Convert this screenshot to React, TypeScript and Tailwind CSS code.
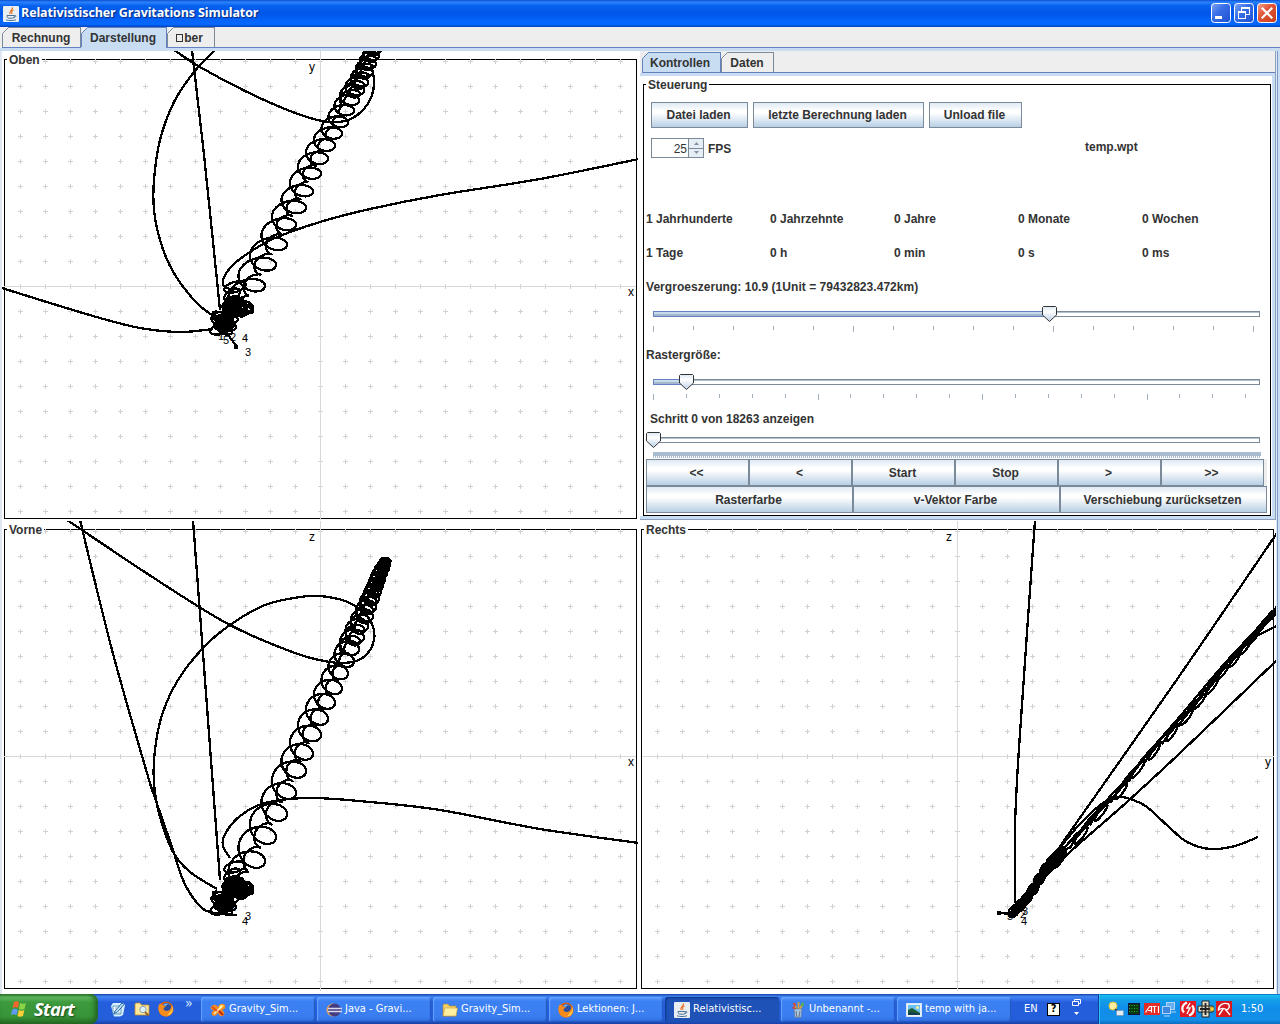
import type { ReactNode } from "react";

type Pt = [number, number];

/* Turns of the binary orbit: right edge x, top-view y, front-view z, width */
const TURNS: [number, number, number, number][] = [
  [252, 307, 884, 28],
  [265, 285, 859, 32],
  [276, 264, 835, 32],
  [287, 244, 812, 31],
  [296, 224, 791, 29],
  [306, 207, 769, 29],
  [313, 191, 752, 27],
  [321, 173, 733, 27],
  [328, 158, 717, 26],
  [335, 145, 701, 25],
  [342, 133, 687, 24],
  [348, 122, 672, 23],
  [354, 110, 660, 22],
  [359, 100, 648, 22],
  [364, 90, 636, 21],
  [368, 82, 625, 20],
  [373, 72, 615, 19],
  [376, 64, 606, 18],
  [379, 56, 598, 17],
  [381, 50, 591, 16],
  [383, 44, 585, 15],
  [385, 38, 579, 15],
  [387, 33, 573, 14],
  [389, 28, 568, 13],
  [390, 24, 564, 11],
  [391, 21, 562, 11],
];

type View = "top" | "front" | "right";

function coil(view: View, scale: number, phase: number, start = 0): string {
  const out: string[] = [];
  const steps = 36;
  const lag = view === "right" ? 0.4 : 0.08;
  for (let i = start * steps; i <= (TURNS.length - 1) * steps; i++) {
    const n = Math.min(Math.floor(i / steps), TURNS.length - 2);
    const f = i / steps - n;
    const [x, y, z, w] = TURNS[n].map((v, k) => v + (TURNS[n + 1][k] - v) * f);
    const a = (i / steps) * Math.PI * 2 + phase;
    const px = x - w / 2 + (w / 2) * scale * Math.cos(a);
    const py = y + w * 0.35 * scale * Math.sin(a);
    const pz = z + w * 0.44 * scale * Math.sin(a + lag);
    const p: Pt = view === "top" ? [px, py] : view === "front" ? [px, pz] : [1345 - py, pz - 1];
    out.push(p[0].toFixed(1) + "," + p[1].toFixed(1));
  }
  return "M" + out.join("L");
}

/* Catmull-Rom spline through the points */
function spline(p: Pt[]): string {
  let d = `M${p[0][0]},${p[0][1]}`;
  for (let i = 0; i < p.length - 1; i++) {
    const a = p[Math.max(i - 1, 0)];
    const b = p[i];
    const c = p[i + 1];
    const e = p[Math.min(i + 2, p.length - 1)];
    d += `C${b[0] + (c[0] - a[0]) / 6},${b[1] + (c[1] - a[1]) / 6} ${c[0] - (e[0] - b[0]) / 6},${c[1] - (e[1] - b[1]) / 6} ${c[0]},${c[1]}`;
  }
  return d;
}

type Ell = [number, number, number, number, number];

interface PlotProps {
  title: string;
  view: View;
  x: number;
  y: number;
  w: number;
  h: number;
  cx: number;
  cy: number;
  curves: Pt[][];
  knots: Ell[];
  marks: [string, number, number][];
  axes: [string, number, number][];
  frame: string;
  extra?: ReactNode;
}

function Plot(p: PlotProps) {
  let grid = "";
  for (let gx = p.cx - 300; gx <= p.cx + 300; gx += 25)
    for (let gy = p.cy - 225; gy <= p.cy + 225; gy += 25)
      if (gx !== p.cx || gy !== p.cy) grid += `M${gx - 2},${gy + 0.5}h5M${gx + 0.5},${gy - 2}v5`;
  return (
    <section className="relative h-full min-w-0 overflow-hidden bg-white">
      <div className={p.frame}>
        <span className="relative -top-[7px] left-[2px] z-10 block w-max bg-white px-[2px] text-[12px] leading-[14px] font-bold text-[#333]">{p.title}</span>
      </div>
      <svg className="absolute inset-0" width={p.w} height={p.h} viewBox={`${p.x} ${p.y} ${p.w} ${p.h}`}>
        <path d={grid} stroke="#d2d2d2" strokeWidth="1" shapeRendering="crispEdges" />
        <path d={`M${p.cx + 0.5},${p.y}V${p.y + p.h}M${p.x + 2},${p.cy + 0.5}H${p.x + p.w - 2}`} stroke="#d8d8d8" shapeRendering="crispEdges" />
        <g fill="none" stroke="#000" strokeWidth="2.3" shapeRendering="crispEdges">
          {p.curves.map((c, i) => (
            <path key={i} d={spline(c)} />
          ))}
          <path d={coil(p.view, 1, 0)} />
          <path d={coil(p.view, 0.34, Math.PI)} />
          <path d={coil(p.view, 0.8, 2.4, 13)} />
          {p.knots.map(([a, b, rx, ry, r], i) => (
            <ellipse key={i} cx={a} cy={b} rx={rx} ry={ry} transform={`rotate(${r} ${a} ${b})`} />
          ))}
          {p.extra}
        </g>
        <g fill="#000" fontFamily="Liberation Sans, sans-serif">
          {p.axes.map(([t, a, b]) => (
            <text key={t} x={a} y={b} fontSize="12">{t}</text>
          ))}
          {p.marks.map(([t, a, b], i) => (
            <text key={i} x={a} y={b} fontSize="11">{t}</text>
          ))}
        </g>
      </svg>
    </section>
  );
}

const GRAD = "bg-[linear-gradient(to_bottom,#dfe9f4_0%,#ffffff_32%,#ffffff_42%,#b8cfe5_100%)]";

function MetalButton({ children, className }: { children: ReactNode; className: string }) {
  return (
    <button className={`${GRAD} shrink-0 border border-[#7a8a99] pr-[2px] text-center text-[12px] font-bold text-[#333] ${className}`}>{children}</button>
  );
}

function Slider({ thumb, filled, step, count }: { thumb: number; filled: boolean; step: number; count: number }) {
  return (
    <svg className="block" width="627" height="30" viewBox="643 0 627 30" shapeRendering="crispEdges">
      <defs>
        <linearGradient id="thumbFill" x1="0" y1="0" x2="0" y2="1">
          <stop offset="0" stopColor="#dde8f3" />
          <stop offset=".35" stopColor="#fff" />
          <stop offset="1" stopColor="#b8cfe5" />
        </linearGradient>
      </defs>
      <rect x="653.5" y="6.5" width="606" height="5" fill="#fff" stroke="#7a8a99" />
      <path d="M654 7.5H1259" stroke="#b5c0cb" />
      {filled && (
        <>
          <rect x="653.5" y="6.5" width={thumb - 653} height="5" fill="#c8daec" stroke="#6382bf" />
          <path d={`M654 10H${thumb}`} stroke="#a3b8cc" strokeWidth="2" />
        </>
      )}
      {count > 0 ? (
        Array.from({ length: count }, (_, i) => (
          <path key={i} d={`M${Math.round(653 + step * i) + 0.5} 21v${i % 5 === 0 ? 6 : 4}`} stroke="#a3b0be" />
        ))
      ) : (
        <>
          <rect x="653" y="21" width="608" height="4" fill="#a9bccf" />
          <path d="M653 26H1261" stroke="#a9bccf" strokeWidth="2" strokeDasharray="1 1" />
        </>
      )}
      <path d={`M${thumb - 6.5} 2.5l1-1h12l1 1v7.5l-7 6.5l-7-6.5z`} fill="url(#thumbFill)" stroke="#333" shapeRendering="auto" />
    </svg>
  );
}

function Tab({ label, active, className }: { label: ReactNode; active?: boolean; className: string }) {
  return (
    <div className={`relative flex h-[20px] items-center justify-center border-t border-r text-[12px] font-bold text-[#333] ${active ? "border-[#6382bf] bg-[#c8ddf2]" : "border-[#7a8a99] bg-[#eeeeee]"} ${className}`}>
      <svg className="absolute -top-px left-0" width="8" height="20">
        <path d="M0 0H7L0 7z" fill="#eeeeee" />
        <path d="M.5 20V6.5L6.5.5H8" fill="none" stroke={active ? "#6382bf" : "#7a8a99"} />
      </svg>
      {label}
    </div>
  );
}

function JavaIcon() {
  return (
    <svg width="16" height="16" viewBox="0 0 16 16">
      <rect width="16" height="16" rx="1" fill="#e9eef2" />
      <path d="M9.5 1.5C10 4 6 4.500 7 8M10.500 4C8 5 8.500 6 9 8" fill="none" stroke="#e76f20" strokeWidth="1.2" />
      <path d="M4 9.500h7.500c0 2-1 2.700-2 2.700H6C5 12.200 4 11.500 4 9.500zM11.500 9.500c2-.5 2 2-1 2M3 13.800c3 1 7 1 10 0" fill="none" stroke="#4c7395" />
    </svg>
  );
}

function FirefoxIcon() {
  return (
    <svg width="16" height="16" viewBox="0 0 16 16">
      <circle cx="8" cy="8" r="7.500" fill="#e66000" />
      <circle cx="8.500" cy="6.500" r="4.800" fill="#2a4fa0" />
      <path d="M5 4c2-2 5-2 7 0-3-1-4 0-4 1z" fill="#7cb8ee" />
      <path d="M1 3.500C2 2 3 3 4.500 4L8 5.500 5.500 7c0 3 3 4 6 2 2-2 2-4 1.500-6 4 4 2.500 12-5 12.500C2 15.500-1 9 1 3.500z" fill="#f58a1d" />
      <path d="M12 11c2-1 2.500-4 2-6 2 4 0 9-5 9.500z" fill="#ffd34a" />
    </svg>
  );
}

function FolderIcon({ search }: { search?: boolean }) {
  return (
    <svg width="16" height="16" viewBox="0 0 16 16">
      {search ? (
        <>
          <path d="M1 3l1-1h4l1.500 2H15v10H1z" fill="#ffe99a" stroke="#c08b2a" strokeWidth=".8" />
          <circle cx="9" cy="8.500" r="3.200" fill="#dff2fd" stroke="#8c9fb3" />
          <path d="M11 11l3.500 3.500" stroke="#9a6226" strokeWidth="2" />
        </>
      ) : (
        <>
          <path d="M1 3l1-1h4l1.500 2H14v10H1z" fill="#f3d06a" stroke="#b98520" strokeWidth=".6" />
          <path d="M1 14L3 6h12.500L14 14z" fill="#fff0a0" stroke="#d2a037" strokeWidth=".6" />
        </>
      )}
    </svg>
  );
}

function ToolIcon() {
  return (
    <svg width="16" height="16" viewBox="0 0 16 16">
      <path d="M1 5c2-3 5-3 7 0 2-4 5-4 7-2 1 3 0 4-3 5 3 2 3 4 1 6-3 1-4-1-5-3-2 3-4 4-6 2-1-2 0-4 2-5-3 0-4-2-3-3z" fill="#f58a22" />
      <path d="M9 4c2-2 4-1 5 0l-4 4z" fill="#ffd94a" />
      <path d="M4 12L12 4" stroke="#fff4cf" strokeWidth="1.400" />
      <path d="M9 9l4 4" stroke="#c12a16" strokeWidth="2.200" />
      <path d="M2 5l5 4" stroke="#d63c1c" strokeWidth="1.600" />
    </svg>
  );
}

function EclipseIcon() {
  return (
    <svg width="16" height="16" viewBox="0 0 16 16">
      <circle cx="7" cy="8" r="6.500" fill="#e9a95c" />
      <circle cx="8.500" cy="8" r="6.500" fill="#453c80" />
      <path d="M2 6.500h14M2 9.500h14" stroke="#dcd9ef" strokeWidth="1.400" />
    </svg>
  );
}

function PaintIcon() {
  return (
    <svg width="16" height="16" viewBox="0 0 16 16">
      <path d="M4 1l3 8M13 1L9 9M8.500 0v8" stroke="#dca038" strokeWidth="1.800" />
      <path d="M4 1l1 3M3 5l3 3" stroke="#da3d2a" strokeWidth="2" />
      <path d="M13 1l-1 3" stroke="#4db04c" strokeWidth="2.500" />
      <path d="M4 7h8l-1 8.500H5z" fill="#a9c8e4" stroke="#5b7998" strokeWidth=".7" />
      <path d="M6 9l1 6M10 9l-1 6" stroke="#716d7c" />
    </svg>
  );
}

function PictureIcon() {
  return (
    <svg width="16" height="16" viewBox="0 0 16 16">
      <rect x=".5" y="1.500" width="15" height="13" fill="#e7f4ff" stroke="#dbe7ee" />
      <rect x="2" y="3" width="12" height="10" fill="#6bc1ef" />
      <path d="M2 8l4-2 8 5v2H2z" fill="#1c5b35" />
      <path d="M2 11c4-2 8 0 12 1v1H2z" fill="#123b50" />
      <circle cx="11.500" cy="5.500" r="1.500" fill="#fff0a0" />
    </svg>
  );
}

function DesktopIcon() {
  return (
    <svg width="16" height="16" viewBox="0 0 16 16">
      <path d="M1 5l2-3h10l2 2-2 10-3 1.500H4z" fill="#d8f0fa" />
      <path d="M3 5h8v8H3z" fill="#fff" stroke="#5c9abf" />
      <path d="M5 10l7-8 2 1.500-7 8-3 1z" fill="#b9dff5" stroke="#2663a7" />
      <path d="M5 7h3M8 12h3" stroke="#7fb2cf" />
    </svg>
  );
}

function Task({ icon, label, active }: { icon: ReactNode; label: string; active?: boolean }) {
  return (
    <div
      className={`flex h-[25px] w-[114px] shrink-0 items-center gap-[3px] rounded-[3px] pl-[9px] text-[11px] text-white ${
        active
          ? "bg-[#1e52b7] shadow-[inset_1px_1px_2px_#0f3585]"
          : "bg-[linear-gradient(to_bottom,#5a9bff_0%,#3c81f3_18%,#3a7df0_80%,#2f6bdb_100%)] shadow-[inset_1px_1px_1px_#69a4ff,inset_-1px_-1px_1px_#2457bd]"
      }`}
    >
      {icon}
      <span className="whitespace-nowrap">{label}</span>
    </div>
  );
}

function WinButton({ kind }: { kind: "min" | "max" | "close" }) {
  return (
    <svg width="20" height="20" viewBox="0 0 20 20">
      <defs>
        <linearGradient id={`wb-${kind}`} x1="0" y1="0" x2="1" y2="1">
          <stop offset="0" stopColor={kind === "close" ? "#f0a58c" : "#7fa6f5"} />
          <stop offset=".4" stopColor={kind === "close" ? "#e2573a" : "#3a6fe8"} />
          <stop offset="1" stopColor={kind === "close" ? "#c93c17" : "#1f50cf"} />
        </linearGradient>
      </defs>
      <rect x=".5" y=".5" width="19" height="19" rx="3" fill={`url(#wb-${kind})`} stroke="#fff" />
      {kind === "min" && <path d="M4 14.500h7" stroke="#fff" strokeWidth="3" />}
      {kind === "max" && (
        <g fill="none" stroke="#fff">
          <path d="M7.500 8V4.500h8v7H12" />
          <path d="M7 5h9" strokeWidth="2" />
          <rect x="4.500" y="8.500" width="7" height="7" />
          <path d="M4 9h8" strokeWidth="2" />
        </g>
      )}
      {kind === "close" && <path d="M5.500 5.500l9 9M14.500 5.500l-9 9" stroke="#fff" strokeWidth="2.200" strokeLinecap="square" />}
    </svg>
  );
}

const TOP_CURVES: Pt[][] = [
  [[215, 50], [194, 72], [174, 102], [160, 140], [154, 180], [154, 210], [160, 240], [170, 266], [184, 288], [200, 306], [215, 317]],
  [[174, 50], [200, 67], [245, 91], [290, 111], [322, 121], [345, 121], [362, 111], [372, 95], [374, 80], [371, 65]],
  [[192, 50], [204, 155], [220, 310]],
  [[2, 288], [50, 303], [100, 318], [140, 328], [180, 332], [213, 329]],
  [[639, 159], [540, 179], [440, 195], [370, 209], [320, 222], [275, 238], [250, 252], [232, 266], [223, 280], [225, 287], [234, 290]],
  [[226, 332], [237, 347]],
];
const FRONT_CURVES: Pt[][] = [
  [[217, 889], [190, 872], [173, 852], [160, 817], [154, 783], [155, 750], [162, 715], [178, 680], [203, 648], [230, 625], [265, 605], [300, 597], [320, 596], [345, 601], [362, 611], [372, 624], [374, 640], [366, 655], [352, 662], [330, 662], [295, 653], [230, 625], [160, 582], [67, 520]],
  [[80, 520], [112, 650], [147, 773], [155, 798], [172, 847], [183, 880], [197, 903], [210, 912], [237, 915]],
  [[193, 520], [208, 720], [220, 880]],
  [[639, 843], [540, 829], [440, 810], [370, 802], [310, 798], [265, 803], [240, 816], [225, 834], [223, 846], [230, 858]],
];
const RIGHT_CURVES: Pt[][] = [
  [[1035, 520], [1019, 748], [1015, 828], [1015, 903]],
  [[1277, 533], [1178, 678], [1070, 832], [1047, 868], [1030, 892]],
  [[1277, 660], [1180, 753], [1127, 802], [1070, 852], [1040, 882], [1014, 908]],
  [[1258, 837], [1235, 846], [1210, 849], [1187, 842], [1170, 828], [1147, 807], [1133, 800], [1120, 797], [1103, 803], [1080, 824], [1060, 848], [1030, 890]],
  [[1277, 626], [1257, 636], [1240, 649], [1226, 662]],
  [[1277, 608], [1226, 662], [1182, 714], [1150, 751], [1116, 794], [1062, 850]],
  [[1277, 613], [1228, 662]],
  [[998, 913], [1014, 914]],
];

function denseKnots(dy: number, stretch: number): Ell[] {
  const k: Ell[] = [];
  for (let i = 0; i < 13; i++) {
    k.push([221 + (i % 4) * 2, dy + 329 - (i % 5) * 3, 11 - (i % 3) * 3, 5 - (i % 2), -15 + i * 4]);
    k.push([233 + (i % 5) * 2.5, dy + 306 + ((i * 3) % 5) * stretch - 2, 11 - (i % 3) * 2, 6 - (i % 2) * 2, i * 5 - 20]);
    k.push([225 + i * 0.6, dy + 322 - i * 1.6, 8, 5, -50]);
  }
  k.push([235, dy + 287, 11, 5, -15], [232, dy + 295, 9, 5, -35], [242, dy + 309, 11, 7, -15]);
  return k;
}

const RIGHT_KNOTS: Ell[] = Array.from({ length: 30 }, (_, i): Ell => {
  const f = i / 29;
  return [1014 + f * 46, 911 - f * 57 + Math.sin(f * 6) * 3, 7, i % 4 === 0 ? 4.5 : 2.5, -52];
});

export default function App() {
  return (
    <div className="flex h-[1024px] w-[1280px] flex-col overflow-hidden bg-[#eeeeee] [font-family:'Liberation_Sans',Arial,sans-serif]">
      <header className="flex h-[27px] shrink-0 items-center bg-[linear-gradient(to_bottom,#0b50d3_0%,#2b82fb_8%,#0560ef_22%,#0056e8_50%,#0565fc_78%,#0468ff_90%,#0341b8_100%)] pr-[3px] pl-[3px]">
        <JavaIcon />
        <h1 className="ml-[2px] flex-1 text-[12.5px] font-bold tracking-[-0.12px] whitespace-nowrap text-white [font-family:'Open_Sans','Noto_Sans',sans-serif] [text-shadow:1px_1px_1px_#0a2a80]">Relativistischer Gravitations Simulator</h1>
        <div className="flex gap-[3px] pb-[2px]">
          <WinButton kind="min" />
          <WinButton kind="max" />
          <WinButton kind="close" />
        </div>
      </header>

      <nav className="flex h-[24px] shrink-0 items-end border-b-[3px] border-[#c8ddf2] pl-[2px]">
        <div className="flex w-full border-b border-[#6382bf]">
          <Tab label="Rechnung" className="w-[79px]" />
          <Tab label="Darstellung" active className="-mb-px h-[21px] w-[86px] pr-px" />
          <Tab
            label={
              <span className="flex items-center">
                <span className="mr-px h-[8px] w-[7px] border border-[#333]" />
                ber
              </span>
            }
            className="w-[48px] pr-[2px]"
          />
        </div>
      </nav>

      <main className="flex min-h-0 flex-1 bg-[#dfe8f1] pl-[2px]">
        <div className="grid w-[1274px] shrink-0 grid-cols-[636px_636px] grid-rows-[469px_470px] gap-x-[2px] gap-y-px bg-white">
          <Plot
            title="Oben"
            view="top"
            x={2} y={51} w={636} h={469} cx={320} cy={286}
            frame="mt-[8px] ml-[2px] h-[460px] w-[633px] border border-black"
            curves={TOP_CURVES}
            knots={denseKnots(0, 1.6)}
            axes={[["y", 309, 71], ["x", 628, 296]]}
            marks={[["4", 242, 342], ["3", 245, 356], ["2", 230, 341], ["5", 223, 344], ["1", 218, 340]]}
            extra={<circle cx="236" cy="347" r="1" fill="#000" />}
          />

          <section className="flex h-[469px] flex-col border-r border-b border-[#8aa0bd] bg-[#c8ddf2]">
            <div className="flex h-[25px] shrink-0 items-end border-b-[3px] border-[#c8ddf2] bg-[#eeeeee] pl-[2px]">
              <div className="flex w-full border-b border-[#6382bf]">
                <Tab label="Kontrollen" active className="-mb-px h-[20px] w-[79px] pr-[2px]" />
                <Tab label="Daten" className="h-[19px] w-[53px]" />
              </div>
            </div>
            <div className="mr-[3px] mb-[3px] flex-1 bg-white pt-[8px] pl-[3px]">
              <div className="h-[432px] w-[628px] border border-black">
                <div className="-mt-[8px] ml-[2px] h-[15px] w-max bg-white px-[2px] text-[12px] leading-[16px] font-bold text-[#333]">Steuerung</div>
                <div className="mt-[10px] ml-[7px] flex gap-[5px]">
                  <MetalButton className="h-[26px] w-[97px]">Datei laden</MetalButton>
                  <MetalButton className="h-[26px] w-[171px]">letzte Berechnung laden</MetalButton>
                  <MetalButton className="h-[26px] w-[93px]">Unload file</MetalButton>
                </div>
                <div className="mt-[10px] ml-[7px] flex h-[20px] items-center text-[12px] text-[#333]">
                  <div className="flex h-[20px] w-[53px] border border-[#7a8a99]">
                    <span className="w-[36px] pr-px text-right leading-[20px]">25</span>
                    <span className="flex flex-1 flex-col border-l border-[#7a8a99] bg-[#e6edf5]">
                      <span className="flex flex-1 items-center justify-center border-b border-[#7a8a99]">
                        <svg width="5" height="3"><path d="M0 3L2.500 0L5 3z" fill="#8793a0" /></svg>
                      </span>
                      <span className="flex flex-1 items-center justify-center">
                        <svg width="5" height="3"><path d="M0 0L2.500 3L5 0z" fill="#8793a0" /></svg>
                      </span>
                    </span>
                  </div>
                  <b className="mt-[2px] ml-[4px] w-[377px]">FPS</b>
                  <b className="-mt-[2px]">temp.wpt</b>
                </div>
                <div className="mt-[44px] ml-[2px] grid grid-cols-[repeat(5,124px)] text-[12px] leading-[34px] font-bold text-[#333]">
                  {["1 Jahrhunderte", "0 Jahrzehnte", "0 Jahre", "0 Monate", "0 Wochen", "1 Tage", "0 h", "0 min", "0 s", "0 ms"].map((t) => (
                    <span key={t} className="whitespace-nowrap">{t}</span>
                  ))}
                </div>
                <div className="ml-[2px] h-[35px] text-[12px] leading-[34px] font-bold tracking-[0.04px] text-[#333]">Vergroeszerung: 10.9 (1Unit = 79432823.472km)</div>
                <div className="-ml-px"><Slider thumb={1049} filled step={40} count={16} /></div>
                <div className="ml-[2px] h-[38px] text-[12px] leading-[40px] font-bold text-[#333]">Rastergröße:</div>
                <div className="-ml-px"><Slider thumb={686} filled step={32.9} count={19} /></div>
                <div className="ml-[6px] h-[28px] text-[12px] leading-[32px] font-bold text-[#333]">Schritt 0 von 18263 anzeigen</div>
                <div className="-ml-px h-[28px]"><Slider thumb={653} filled={false} step={0} count={0} /></div>
                <div className="ml-[2px] flex w-[621px] bg-[#eeeeee]">
                  {["<<", "<", "Start", "Stop", ">", ">>"].map((t) => (
                    <MetalButton key={t} className="h-[27px] w-[103px]">{t}</MetalButton>
                  ))}
                </div>
                <div className="ml-[2px] flex">
                  {["Rasterfarbe", "v-Vektor Farbe", "Verschiebung zurücksetzen"].map((t) => (
                    <MetalButton key={t} className="h-[27px] w-[207px]">{t}</MetalButton>
                  ))}
                </div>
              </div>
            </div>
          </section>

          <Plot
            title="Vorne"
            view="front"
            x={2} y={521} w={636} h={470} cx={320} cy={756}
            frame="mt-[8px] ml-[2px] h-[460px] w-[633px] border border-black"
            curves={FRONT_CURVES}
            knots={denseKnots(577, 2.2).map(([a, b, c, d, e]): Ell => [a, b + 3, c, d, e])}
            axes={[["z", 309, 541], ["x", 628, 766]]}
            marks={[["3", 245, 920], ["4", 242, 925], ["2", 230, 911]]}
          />
          <Plot
            title="Rechts"
            view="right"
            x={640} y={521} w={636} h={470} cx={957} cy={756}
            frame="mt-[8px] ml-[1px] h-[460px] w-[633px] border border-black"
            curves={RIGHT_CURVES}
            knots={RIGHT_KNOTS}
            axes={[["z", 946, 541], ["y", 1265, 766]]}
            marks={[["3", 1022, 915], ["2", 1020, 918], ["4", 1021, 925], ["5", 1007, 920]]}
            extra={<circle cx="999" cy="913" r="1" fill="#000" />}
          />
        </div>
        <div className="ml-px flex-1 border-l border-[#7a9acb] bg-[#c8ddf2]" />
      </main>

      <footer className="flex h-[30px] shrink-0 bg-[linear-gradient(to_bottom,#1941a5_0%,#3c81f0_8%,#3a7bee_14%,#245edc_28%,#245edb_85%,#1941a5_100%)] [font-family:'DejaVu_Sans_Condensed','DejaVu_Sans',sans-serif]">
        <div className="flex w-[98px] shrink-0 items-center gap-[5px] rounded-r-[8px] bg-[linear-gradient(to_bottom,#2f7d2f_0%,#62b862_10%,#3c9a3c_28%,#389438_75%,#256a25_100%)] pl-[11px] shadow-[inset_-3px_0_5px_#226322]">
          <svg width="18" height="18" viewBox="0 0 18 18">
            <path d="M3 2c2-1 3-1 5 0L7 8C5 7 3 7 1.500 8z" fill="#f2652a" />
            <path d="M9 3c2 1 4 1 6 0l-1.500 6c-2 1-4 1-5.500 0z" fill="#8bd544" />
            <path d="M1.300 9.500c2-1 3.500-1 5.500 0L5.500 15c-2-1-4-1-5.500 0z" fill="#5f9bf4" />
            <path d="M7.800 10c2 1 4 1 5.500 0L12 16c-2 1-4 1-5.500 0z" fill="#ffcf39" />
          </svg>
          <span className="text-[18.5px] font-bold tracking-[-0.7px] text-white italic [font-family:'Open_Sans',sans-serif] [text-shadow:1px_1px_2px_#174417]">Start</span>
        </div>
        <div className="flex w-[103px] shrink-0 items-center gap-[8px] pl-[12px]">
          <DesktopIcon />
          <FolderIcon search />
          <FirefoxIcon />
          <span className="-mt-[12px] ml-[3px] text-[14px] text-[#d5e5ff]">»</span>
        </div>
        <div className="flex w-[820px] shrink-0 items-center gap-[2px] pt-[1px]">
          <Task icon={<ToolIcon />} label="Gravity_Sim..." />
          <Task icon={<EclipseIcon />} label="Java - Gravi..." />
          <Task icon={<FolderIcon />} label="Gravity_Sim..." />
          <Task icon={<FirefoxIcon />} label="Lektionen: J..." />
          <Task icon={<JavaIcon />} label="Relativistisc..." active />
          <Task icon={<PaintIcon />} label="Unbenannt -..." />
          <Task icon={<PictureIcon />} label="temp with ja..." />
        </div>
        <div className="flex w-[77px] shrink-0 items-center pl-[3px] text-[11px] text-white">
          <span className="w-[23px]">EN</span>
          <span className="flex h-[13px] w-[13px] items-center justify-center border border-black bg-[#fffef0] text-[11px] font-bold text-black">?</span>
          <svg className="ml-[12px]" width="9" height="22" viewBox="0 0 9 22">
            <path d="M2.500 3V1.500h6v4H7M.5 3.500h6v4h-6z" fill="none" stroke="#fff" />
            <path d="M2 14h5l-2.500 3z" fill="#fff" />
          </svg>
        </div>
        <div className="flex flex-1 items-center border-l border-[#0d3f9e] bg-[linear-gradient(to_bottom,#0c59b9_0%,#18bbf0_5%,#139ee9_20%,#0f8dea_50%,#1290e8_85%,#0d6dc0_100%)] pl-[8px] shadow-[inset_1px_0_0_#2fc2f5]">
          <svg width="126" height="18" viewBox="1107 0 126 18">
            <circle cx="1113" cy="6" r="4" fill="#ffee9e" stroke="#e5c33d" />
            <path d="M1115 9l3 2" stroke="#333" strokeWidth="1.500" />
            <rect x="1116.500" y="10.500" width="7" height="5" rx="1" fill="#e3edf5" stroke="#7ca0bc" />
            <rect x="1128.500" y="3.500" width="11" height="11" fill="#073b0d" stroke="#114" />
            <path d="M1129 5.500h10M1129 8.500h10M1129 11.500h10" stroke="#2da339" strokeDasharray="1 1.500" />
            <rect x="1144" y="3" width="16" height="12" fill="#e52b23" />
            <path d="M1145.500 12.500l4-6h2v6M1148 10.500h3M1152.500 6.500h4M1154.500 7v6M1158.500 6v7" fill="none" stroke="#fff" strokeWidth="1.200" />
            <rect x="1166.500" y="2.500" width="8" height="7" fill="#65aef0" stroke="#b2d4f4" />
            <rect x="1162.500" y="6.500" width="8" height="7" fill="#3f87de" stroke="#b2d4f4" />
            <path d="M1164 16h6M1171 12h5" stroke="#b2d4f4" />
            <rect x="1180" y="1" width="16" height="16" fill="#e21b22" />
            <path d="M1187 2.500c-5 2-6 7-3 10M1189 15.500c5-2 6-7 3-10" fill="none" stroke="#fff" strokeWidth="2.200" />
            <path d="M1190 3l-3 5h3l-3 6" fill="none" stroke="#fff" strokeWidth="1.400" />
            <path d="M1202 1h7v16h-7zM1198 6h15v6h-15z" fill="#e4e0cc" stroke="#222" />
            <path d="M1205.500 3v12M1200 9h11" stroke="#222" strokeWidth="1.800" />
            <circle cx="1212" cy="9" r="2.200" fill="#f3db45" stroke="#6b5a10" strokeWidth=".6" />
            <rect x="1216" y="1" width="16" height="16" fill="#d71920" />
            <path d="M1218.500 10c0-5 5-8 10-6 2 3 0 5-2 6-2-2-5-2-8 0zM1223 9l-4 6M1225 9l5 6" fill="none" stroke="#fff" strokeWidth="1.400" />
          </svg>
          <span className="ml-[8px] text-[11px] text-white">1:50</span>
        </div>
      </footer>
    </div>
  );
}
